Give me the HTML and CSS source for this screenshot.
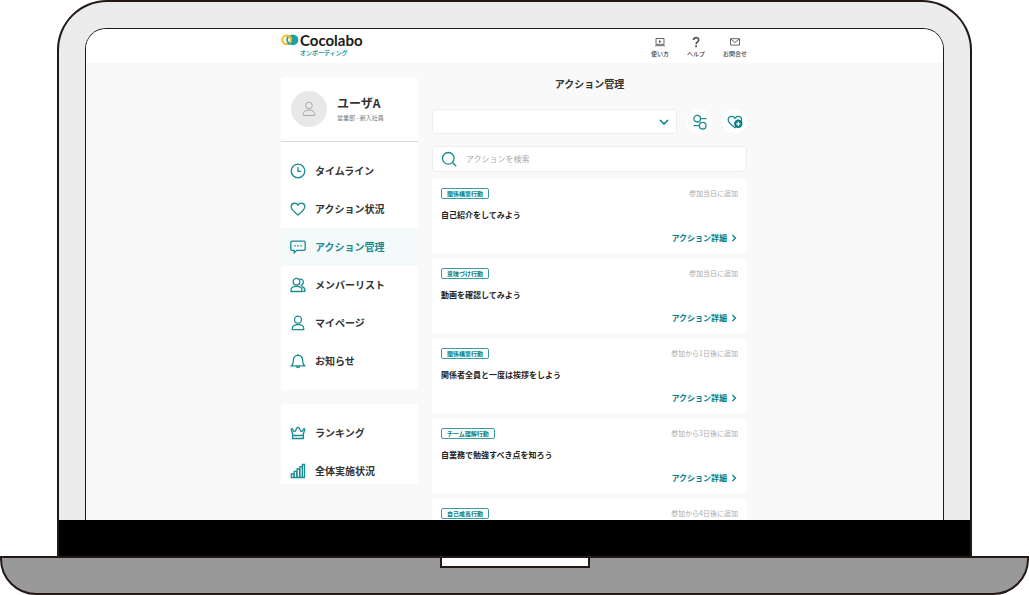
FILE: index.html
```html
<!DOCTYPE html>
<html lang="ja">
<head>
<meta charset="utf-8">
<meta name="viewport" content="width=device-width, initial-scale=1">
<title>Cocolabo オンボーディング</title>
<link rel="stylesheet" href="styles.css">
</head>
<body>
<div class="laptop">
  <div class="lid">
    <div class="screen">
      <header class="topbar">
        <div class="wrap topbar-inner">
          <a class="logo" href="#">
            <svg class="logo-mark" viewBox="0 0 18 12" aria-hidden="true">
              <circle cx="12" cy="5.800" r="5.400" fill="#22a0aa"/>
              <circle cx="5.700" cy="5.800" r="4.300" fill="#fff" stroke="#f5bd17" stroke-width="2"/>
              <path d="M7.300 2.500A5 5 0 0 0 9.500 10.400" fill="none" stroke="#22a0aa" stroke-width="1.800"/>
              <path d="M7.500 1.900A4.500 4.500 0 0 1 10 6" fill="none" stroke="#f5bd17" stroke-width="1.900"/>
            </svg>
            <span class="logo-text"><span class="logo-name">Cocolabo</span><span class="logo-sub">オンボーディング</span></span>
          </a>
          <nav class="help-nav">
            <a href="#">
              <svg viewBox="0 0 12 12" fill="none" stroke="#666" aria-hidden="true"><path d="M2 2.500h8v5.800H2zM1 9.700h10"/><path d="M5 3.900v3L7.600 5.400z" fill="#666" stroke="none"/></svg>
              使い方
            </a>
            <a href="#">
              <svg viewBox="0 0 12 12" fill="none" stroke="#555" stroke-width="1.700" aria-hidden="true"><path d="M3.500 4C3.500 .800 8.700 .900 8.700 3.900 8.700 5.900 6.100 5.900 6.100 8.300M6.100 9.300v1.900"/></svg>
              ヘルプ
            </a>
            <a href="#">
              <svg viewBox="0 0 12 12" fill="none" stroke="#666" aria-hidden="true"><path d="M1.500 2.700h9v6.400h-9zM1.800 3l4.200 3.500L10.200 3"/></svg>
              お問合せ
            </a>
          </nav>
        </div>
      </header>

      <div class="wrap content">
        <aside class="sidebar">
          <section class="panel">
            <div class="profile">
              <span class="avatar">
                <svg viewBox="0 0 16 16" fill="none" stroke="#aaa" aria-hidden="true"><circle cx="8" cy="4.500" r="3.300"/><path d="M2.200 14.500v-1.300C2.200 7.700 13.800 7.700 13.800 13.200v1.300z"/></svg>
              </span>
              <div>
                <div class="profile-name">ユーザA</div>
                <div class="profile-dept">営業部 - 新入社員</div>
              </div>
            </div>
            <nav class="menu">
              <a href="#">
                <svg viewBox="0 0 16 16" aria-hidden="true"><circle cx="8" cy="8" r="6.800"/><path d="M8 4v4.300h3.300"/></svg>
                タイムライン
              </a>
              <a href="#">
                <svg viewBox="0 0 16 16" aria-hidden="true"><path d="M8 14C5 11.600 1.200 9 1.200 5.600 1.200 1.800 6 .900 8 4.200 10 .900 14.800 1.800 14.800 5.600 14.800 9 11 11.600 8 14z"/></svg>
                アクション状況
              </a>
              <a class="active" href="#" aria-current="page">
                <svg viewBox="0 0 16 16" aria-hidden="true"><path d="M2 2.200h12q1.200 0 1.200 1.200v6.700q0 1.200-1.200 1.200H6.800L4.200 13.700v-2.400H2q-1.200 0-1.200-1.200V3.400q0-1.200 1.200-1.200z"/><path d="M4.300 6.900h1.500M7.300 6.900h1.500M10.300 6.900h1.500"/></svg>
                アクション管理
              </a>
              <a href="#">
                <svg viewBox="0 0 16 16" aria-hidden="true"><circle cx="6.500" cy="4.700" r="3.300"/><path d="M1 14.500v-1.200C1 8 12 8 12 13.300v1.200z"/><path d="M9.500 2.500C12 1.500 13.700 3.500 13.300 5.600 13 7.500 11.700 8.200 10.500 8.300M11.500 9.500C14 10 15 11.500 15 14.300H12.500"/></svg>
                メンバーリスト
              </a>
              <a href="#">
                <svg viewBox="0 0 16 16" aria-hidden="true"><circle cx="8" cy="4.700" r="3.500"/><path d="M2.300 14.700v-1.200C2.300 8.300 13.700 8.300 13.700 13.500v1.200z"/></svg>
                マイページ
              </a>
              <a href="#">
                <svg viewBox="0 0 16 16" aria-hidden="true"><path d="M1.500 12.800C3.300 11.300 3.400 9.500 3.400 7.200 3.400 4.200 5.200 2.300 8 2.300s4.600 1.900 4.600 4.900c0 2.300.1 4.100 1.900 5.600zM8 2.300V.800M6.500 13C6.500 15.200 9.500 15.200 9.500 13"/></svg>
                お知らせ
              </a>
            </nav>
          </section>
          <section class="panel">
            <nav class="menu">
              <a href="#">
                <svg viewBox="0 0 16 16" aria-hidden="true"><path d="M3 10.300L1.200 4.300Q2.600 2.800 3.200 5.200 3.900 7.300 5.300 6L6.600 3.400Q8 1.400 9.400 3.400L10.700 6Q12.100 7.300 12.800 5.200 13.400 2.800 14.800 4.300L13 10.300zM2.600 10.500h10.800v3H2.600z"/></svg>
                ランキング
              </a>
              <a href="#">
                <svg viewBox="0 0 16 16" aria-hidden="true"><path d="M1.300 14.500v-3.500h2.500v3.500M4.200 14.500V8.300h2.500v6.200M7.100 14.500V6h2.500v8.500M10 14.500V3.600h2.300v10.900M12.500 14.500V1.500h2v13M.700 14.500h14.300"/></svg>
                全体実施状況
              </a>
            </nav>
          </section>
        </aside>

        <main class="main">
          <h1>アクション管理</h1>
          <div class="tools">
            <select class="picker" aria-label="アクションの種類"><option></option></select>
            <button class="round" type="button" aria-label="絞り込み">
              <svg viewBox="0 0 16 16" aria-hidden="true"><circle cx="5.200" cy="4.700" r="3.300"/><path d="M8.500 4.700h6M1.500 11.700h6"/><circle cx="10.700" cy="11.700" r="3.300"/></svg>
            </button>
            <button class="round" type="button" aria-label="アクションを追加">
              <svg viewBox="0 0 16 16" aria-hidden="true"><path d="M8 13.700C5 11.300 1.200 9 1.200 5.700 1.200 2 6 1.200 8 4.300 10 1.200 14.600 2 14.600 5.700 14.600 9 11 11.300 8 13.700z"/><circle class="plus-disc" cx="11.300" cy="9.800" r="4.200"/><path class="plus-sign" d="M11.300 7.700v4.200M9.200 9.800h4.200"/></svg>
            </button>
          </div>
          <label class="search">
            <svg viewBox="0 0 16 16" aria-hidden="true"><circle cx="7.300" cy="7.300" r="5.800"/><path d="M11.500 11.500l3.700 3.700"/></svg>
            <input type="search" placeholder="アクションを検索" aria-label="アクションを検索">
          </label>

          <div class="cards">
            <article class="card">
              <div class="card-head"><span class="tag">関係構築行動</span><span class="when">参加当日に追加</span></div>
              <h2>自己紹介をしてみよう</h2>
              <a class="detail" href="#">アクション詳細<svg viewBox="0 0 8 8" aria-hidden="true"><path d="M2.500 1l3 3-3 3"/></svg></a>
            </article>
            <article class="card">
              <div class="card-head"><span class="tag">意味づけ行動</span><span class="when">参加当日に追加</span></div>
              <h2>動画を確認してみよう</h2>
              <a class="detail" href="#">アクション詳細<svg viewBox="0 0 8 8" aria-hidden="true"><path d="M2.500 1l3 3-3 3"/></svg></a>
            </article>
            <article class="card">
              <div class="card-head"><span class="tag">関係構築行動</span><span class="when">参加から1日後に追加</span></div>
              <h2>関係者全員と一度は挨拶をしよう</h2>
              <a class="detail" href="#">アクション詳細<svg viewBox="0 0 8 8" aria-hidden="true"><path d="M2.500 1l3 3-3 3"/></svg></a>
            </article>
            <article class="card">
              <div class="card-head"><span class="tag">チーム理解行動</span><span class="when">参加から3日後に追加</span></div>
              <h2>自業務で勉強すべき点を知ろう</h2>
              <a class="detail" href="#">アクション詳細<svg viewBox="0 0 8 8" aria-hidden="true"><path d="M2.500 1l3 3-3 3"/></svg></a>
            </article>
            <article class="card">
              <div class="card-head"><span class="tag">自己成長行動</span><span class="when">参加から4日後に追加</span></div>
            </article>
          </div>
        </main>
      </div>
    </div>
    <div class="chin"></div>
  </div>
  <div class="base"><div class="notch"></div></div>
</div>
</body>
</html>
```

FILE: styles.css
```css
* {
  box-sizing: border-box;
}

body {
  margin: 0;
  background: #fff;
  color: #333;
  font-family: "Noto Sans CJK JP", sans-serif;
  font-size: 10px;
  line-height: 12px;
}

a {
  color: inherit;
  text-decoration: none;
}

svg {
  display: block;
  flex: none;
}

/* Laptop frame */
.laptop {
  display: flex;
  flex-direction: column;
  height: 100vh;
}

.lid {
  display: flex;
  flex: 1;
  flex-direction: column;
  min-height: 0;
  margin: 0 57px;
  border: 2px solid #231815;
  border-bottom: 0;
  border-radius: 50px 50px 0 0;
  background: #ececec;
}

.screen {
  display: flex;
  flex: 1;
  flex-direction: column;
  min-height: 0;
  margin: 26px 26px 0;
  border: 1px solid #231815;
  border-bottom: 0;
  border-radius: 21px 21px 0 0;
  background: #f9f9f9;
  overflow: hidden;
}

.chin {
  flex: none;
  height: 36px;
  background: #000;
}

.base {
  display: flex;
  flex: none;
  justify-content: center;
  height: 39px;
  border: 2px solid #231815;
  border-radius: 0 0 36px 36px;
  background: #999;
}

.notch {
  width: 150px;
  height: 10px;
  border: 2px solid #231815;
  border-top: 0;
  background: #fff;
}

/* Header */
.wrap {
  width: 100%;
  max-width: 467px;
  margin: 0 auto;
  padding-right: 1px;
}

.topbar {
  flex: none;
  height: 34px;
  background: #fff;
}

.topbar-inner {
  display: flex;
  justify-content: space-between;
  padding-top: 5px;
}

.logo {
  display: flex;
  gap: 1px;
}

.logo-mark {
  width: 18px;
  height: 12px;
}

.logo-text {
  display: flex;
  flex-direction: column;
  gap: 2px;
}

.logo-name {
  color: #1a1a1a;
  font-family: Lato, sans-serif;
  font-size: 15px;
  font-weight: 700;
  line-height: 12px;
}

.logo-sub {
  color: #1a9aa5;
  font-size: 6px;
  font-weight: 700;
  line-height: 9px;
}

.help-nav {
  display: flex;
  gap: 18px;
  color: #444;
  font-size: 6px;
  font-weight: 500;
}

.help-nav a {
  display: flex;
  flex-direction: column;
  align-items: center;
  padding-top: 2px;
}

.help-nav svg {
  width: 12px;
  height: 12px;
}

/* Page columns */
.content {
  display: flex;
  flex: 1;
  gap: 14px;
  min-height: 0;
}

.sidebar {
  display: flex;
  flex: 0 0 137px;
  flex-direction: column;
  gap: 14px;
  margin: 14px 0 36px;
  overflow: hidden;
}

.panel {
  flex: none;
  border-radius: 4px;
  background: #fff;
  overflow: hidden;
}

.profile {
  display: flex;
  gap: 10px;
  align-items: center;
  height: 65px;
  padding: 0 10px;
  border-bottom: 1px solid #d9d9d9;
}

.avatar {
  display: grid;
  place-items: center;
  width: 36px;
  height: 36px;
  border-radius: 50%;
  background: #e8e8e8;
}

.avatar svg {
  width: 16px;
  height: 16px;
}

.profile-name {
  font-size: 12px;
  font-weight: 700;
  line-height: 18px;
}

.profile-dept {
  color: #777;
  font-size: 6px;
}

.menu {
  display: flex;
  flex-direction: column;
  padding: 10px 0;
}

.menu a {
  display: flex;
  gap: 9px;
  align-items: center;
  height: 38px;
  padding: 0 9px;
  font-weight: 700;
}

.menu .active {
  background: #f4f9fa;
  color: #1a8b92;
}

.menu svg,
.round svg,
.search svg {
  width: 16px;
  height: 16px;
  fill: none;
  stroke: #1a8b92;
  stroke-width: 1.3;
}

.round .plus-disc {
  fill: #007f86;
  stroke: none;
}

.round .plus-sign {
  stroke: #fff;
}

/* Action list */
.main {
  flex: 1;
  min-width: 0;
  padding-top: 15px;
}

h1,
h2 {
  margin: 0;
}

h1 {
  font-size: 10px;
  line-height: 12px;
  text-align: center;
}

.tools {
  display: flex;
  gap: 10px;
  align-items: center;
  margin-top: 19px;
}

.picker {
  flex: 1;
  min-width: 0;
  height: 25px;
  border: 1px solid #eee;
  border-radius: 3px;
  background: #fff url("data:image/svg+xml,%3Csvg xmlns='http://www.w3.org/2000/svg' width='10' height='6' fill='none' stroke='%23007f86' stroke-width='1.5'%3E%3Cpath d='M1 1l4 4 4-4'/%3E%3C/svg%3E") no-repeat right 7px center;
  appearance: none;
}

.round {
  display: grid;
  place-items: center;
  width: 25px;
  height: 25px;
  padding: 0;
  border: 0;
  border-radius: 50%;
  background: #fff;
}

.search {
  display: flex;
  gap: 9px;
  align-items: center;
  height: 26px;
  margin-top: 12px;
  padding: 0 8px;
  border: 1px solid #eee;
  border-radius: 4px;
  background: #fff;
}

.search input {
  flex: 1;
  min-width: 0;
  padding: 0;
  border: 0;
  outline: 0;
  background: none;
  font: inherit;
  font-size: 8px;
}

.search input::placeholder {
  color: #aaa;
}

.cards {
  display: flex;
  flex-direction: column;
  gap: 4px;
  margin-top: 6px;
}

.card {
  display: flex;
  flex-direction: column;
  gap: 10px;
  min-height: 76px;
  padding: 10px 9px 8px;
  border-radius: 4px;
  background: #fff;
}

.card-head {
  display: flex;
  justify-content: space-between;
  align-items: center;
}

.tag {
  padding: 0 5px;
  border: 1px solid #3a9da3;
  border-radius: 2px;
  color: #007f86;
  font-size: 6px;
  font-weight: 700;
  line-height: 9px;
}

.when {
  color: #aaa;
  font-size: 7px;
  line-height: 11px;
}

h2 {
  color: #222;
  font-size: 8px;
  line-height: 12px;
}

.detail {
  display: flex;
  gap: 3px;
  align-items: center;
  align-self: flex-end;
  color: #007f86;
  font-size: 8px;
  font-weight: 700;
  line-height: 14px;
}

.detail svg {
  width: 8px;
  height: 8px;
  fill: none;
  stroke: #007f86;
  stroke-width: 1.3;
}
```
